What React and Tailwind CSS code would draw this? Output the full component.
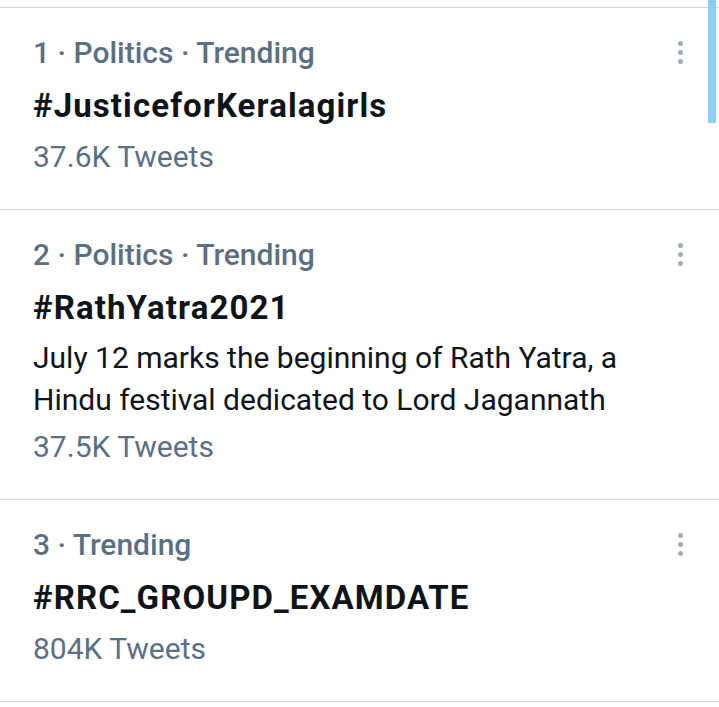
const trends = [
  {
    meta: '1 · Politics · Trending',
    tag: '#JusticeforKeralagirls',
    count: '37.6K Tweets',
  },
  {
    meta: '2 · Politics · Trending',
    tag: '#RathYatra2021',
    desc: 'July 12 marks the beginning of Rath Yatra, a Hindu festival dedicated to Lord Jagannath',
    count: '37.5K Tweets',
  },
  {
    meta: '3 · Trending',
    tag: '#RRC_GROUPD_EXAMDATE',
    count: '804K Tweets',
  },
];

const MoreDots = () => (
  <div className="flex flex-col items-center gap-[4px] pt-[33px]">
    <span className="w-[5px] h-[5px] rounded-full bg-[#a3adb7]" />
    <span className="w-[5px] h-[5px] rounded-full bg-[#a3adb7]" />
    <span className="w-[5px] h-[5px] rounded-full bg-[#a3adb7]" />
  </div>
);

export default function App() {
  return (
    <div
      className="relative w-full min-h-screen bg-white pt-[7px]"
      style={{ fontFamily: 'Roboto, "Noto Sans", sans-serif' }}
    >
      <div className="border-t border-[#ccd6dd]">
        {trends.map((t) => (
          <div key={t.tag} className="flex border-b border-[#ccd6dd] pl-[33px] pr-[36px]">
            <div className="flex-1 pt-[24px] pb-[31px]">
              <div className="text-[30px] leading-[42px] font-medium text-[#5b7083]">{t.meta}</div>
              <div className="mt-[6px] text-[33px] leading-[52px] font-bold tracking-[1.1px] text-[#0f1419]">
                {t.tag}
              </div>
              {t.desc && (
                <div className="mt-[3px] mb-[5px] text-[30px] leading-[42px] text-[#0f1419]">{t.desc}</div>
              )}
              <div className="mt-[4px] text-[30px] leading-[42px] text-[#5b7083]">{t.count}</div>
            </div>
            <MoreDots />
          </div>
        ))}
      </div>

      {/* scrollbar */}
      <div className="absolute top-0 right-[3px] w-[8px] h-[123px] bg-[#8ecdf6]" />
    </div>
  );
}
